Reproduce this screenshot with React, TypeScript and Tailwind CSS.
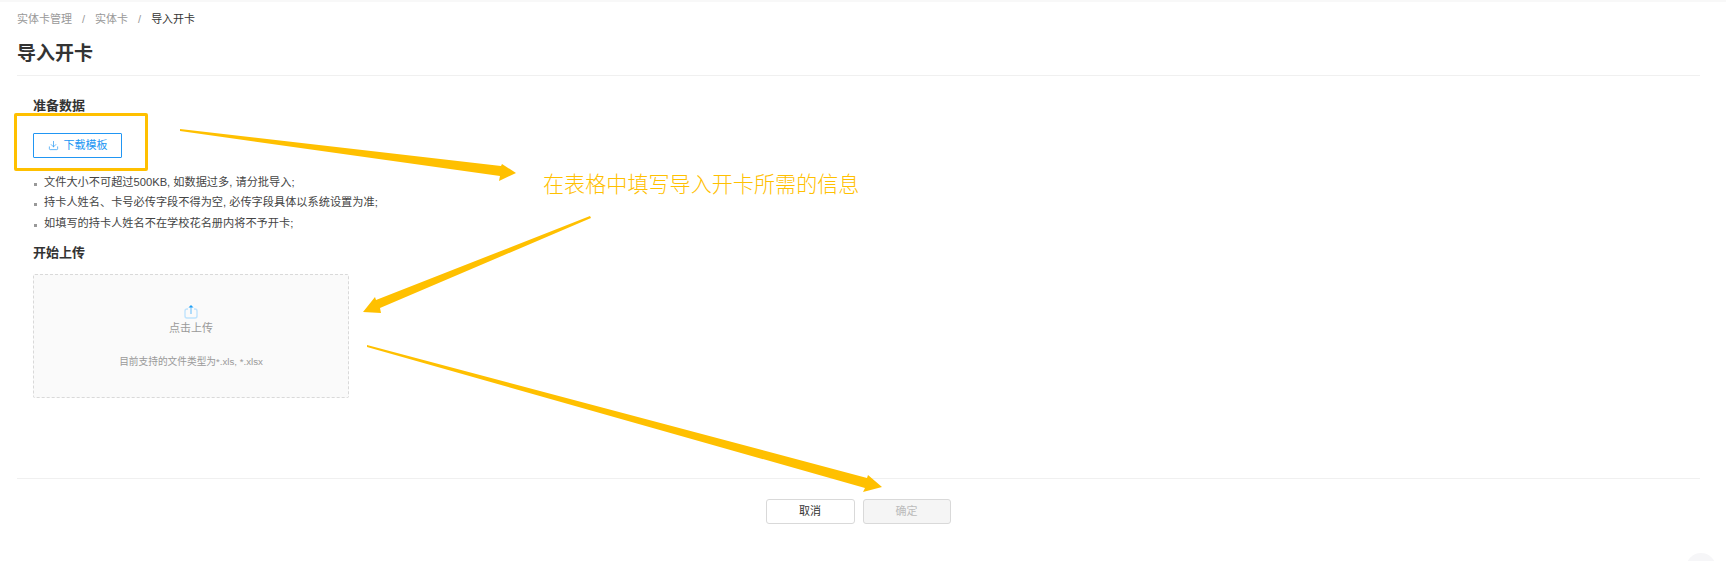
import { Download } from "lucide-react";

const tips = [
  "文件大小不可超过500KB, 如数据过多, 请分批导入;",
  "持卡人姓名、卡号必传字段不得为空, 必传字段具体以系统设置为准;",
  "如填写的持卡人姓名不在学校花名册内将不予开卡;",
];

function UploadIcon() {
  return (
    <svg width="14" height="15" viewBox="0 0 14 15" fill="none">
      <path d="M4 5H3a2 2 0 0 0-2 2v5a2 2 0 0 0 2 2h8a2 2 0 0 0 2-2V7a2 2 0 0 0-2-2h-1" stroke="#bfe3fd" strokeWidth="1.4" />
      <path d="M7 10V3" stroke="#8fcdf9" strokeWidth="1.4" />
      <path d="M4.5 3.5 7 1l2.5 2.5z" fill="#1f9ff5" />
    </svg>
  );
}

// annotations drawn on top of the screenshot
function Arrows() {
  return (
    <svg className="absolute left-0 -top-[2px] pointer-events-none" width="1726" height="561" fill="#ffc000">
      <polygon points="180,129 501,166 502,164 516,173 499,181 500,176 180,131" />
      <polygon points="590,216 376,300 375,297 363,312 381,313 380,308 591,218" />
      <polygon points="367,345 867,478 868,475 882,487 863,492 865,488 367,347" />
    </svg>
  );
}

export default function App() {
  return (
    <div className="relative h-[561px] overflow-hidden bg-white font-['Liberation_Sans','Noto_Sans_CJK_SC',sans-serif] border-t-2 border-[#f8f8f8]">
      <div className="px-[17px]">
        <div className="flex items-center h-[14px] mt-[10px] text-[11px] text-[#999]">
          <span>实体卡管理</span>
          <span className="mx-[10px]">/</span>
          <span>实体卡</span>
          <span className="mx-[10px]">/</span>
          <span className="text-[#333]">导入开卡</span>
        </div>
        <h1 className="mt-[14px] h-[27px] leading-[27px] text-[19px] font-bold text-[#333]">导入开卡</h1>
        <div className="mt-[8px] h-px bg-[#f0f0f0] w-[1683px]" />

        <div className="pl-4">
          <h2 className="mt-[21px] h-[18px] leading-[18px] text-[13px] font-bold text-[#333]">准备数据</h2>
          <button className="mt-[18px] flex items-center justify-center gap-[5px] w-[89px] h-[25px] border border-[#2196f3] rounded-[1px] text-[11px] text-[#2196f3] bg-white">
            <Download size={11} strokeWidth={1.5} />
            下载模板
          </button>
          <ul className="mt-[16px] flex flex-col gap-[4.5px]">
            {tips.map((tip) => (
              <li key={tip} className="flex items-center h-[16px] text-[11.2px] text-[#444]">
                <span className="w-[3px] h-[3px] mt-[4px] ml-[1px] mr-[7px] bg-[#999]" />
                {tip}
              </li>
            ))}
          </ul>
          <h2 className="mt-[13px] h-[18px] leading-[18px] text-[13px] font-bold text-[#333]">开始上传</h2>
          <div className="mt-[12px] w-[316px] h-[124px] flex flex-col items-center bg-[#fafafa] border border-dashed border-[#d9d9d9] rounded-[2px]">
            <div className="mt-[29px]">
              <UploadIcon />
            </div>
            <div className="mt-[1px] h-[16px] leading-[16px] text-[11px] text-[#999]">点击上传</div>
            <div className="mt-[18px] h-[16px] leading-[16px] text-[9.7px] text-[#999]">目前支持的文件类型为*.xls, *.xlsx</div>
          </div>
        </div>

        <div className="mt-[80px] h-px bg-[#f0f0f0] w-[1683px]" />
        <div className="mt-[20px] flex justify-center gap-2 pr-[10px]">
          <button className="w-[89px] h-[25px] border border-[#d9d9d9] rounded-[3px] bg-white text-[11px] text-[#333]">取消</button>
          <button className="w-[88px] h-[25px] border border-[#d9d9d9] rounded-[3px] bg-[#f5f5f5] text-[11px] text-[#bbb]">确定</button>
        </div>
      </div>

      <div className="absolute left-[14px] top-[111px] w-[134px] h-[58px] border-[3px] border-[#ffc000] rounded-[2px]" />
      <Arrows />
      <div className="absolute left-[543px] top-[169px] text-[21.1px] leading-[28px] font-light text-[#ffc000]">在表格中填写导入开卡所需的信息</div>
      <div className="absolute left-[1686px] top-[551px] w-[30px] h-[30px] rounded-full bg-[#f6f6f8]" />
    </div>
  );
}
